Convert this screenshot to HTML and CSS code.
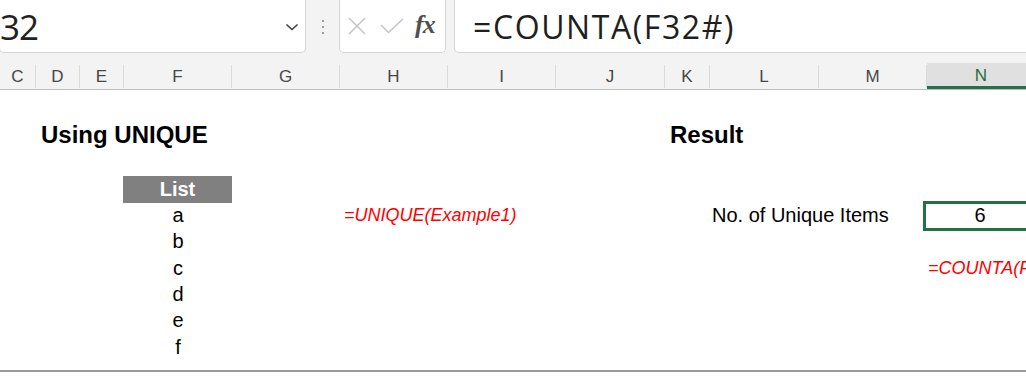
FILE: index.html
```html
<!DOCTYPE html>
<html>
<head>
<meta charset="utf-8">
<link rel="stylesheet" href="styles.css">
</head>
<body>
<div class="app">
  <div class="fbar">
    <div class="namebox">
      <span class="ref">32</span>
      <svg class="chev" width="14" height="8" viewBox="0 0 14 8"><path d="M1.5 1.5 L7 6.5 L12.5 1.5" fill="none" stroke="#404040" stroke-width="1.6"/></svg>
    </div>
    <div class="grip">
      <svg width="4" height="16" viewBox="0 0 4 16"><circle cx="2" cy="2" r="1.1" fill="#8a8a8a"/><circle cx="2" cy="8" r="1.1" fill="#8a8a8a"/><circle cx="2" cy="14" r="1.1" fill="#8a8a8a"/></svg>
    </div>
    <div class="fxbox">
      <svg class="ic-x" width="18" height="18" viewBox="0 0 18 18"><path d="M1 1 L17 17 M17 1 L1 17" stroke="#c4c4c4" stroke-width="1.5" fill="none"/></svg>
      <svg class="ic-ok" width="24" height="16" viewBox="0 0 24 16"><path d="M1 7 L8.5 14.5 L23 1" stroke="#c4c4c4" stroke-width="1.5" fill="none"/></svg>
      <span class="fx">fx</span>
    </div>
    <div class="formula">=COUNTA(F32#)</div>
  </div>

  <div class="grid colheads">
    <div class="ch">C</div>
    <div class="ch">D</div>
    <div class="ch">E</div>
    <div class="ch">F</div>
    <div class="ch">G</div>
    <div class="ch">H</div>
    <div class="ch">I</div>
    <div class="ch">J</div>
    <div class="ch">K</div>
    <div class="ch">L</div>
    <div class="ch">M</div>
    <div class="ch ch-sel">N</div>
  </div>

  <div class="grid sheet">
    <div class="cell title t-left">Using UNIQUE</div>
    <div class="cell title t-right">Result</div>
    <div class="cell listhead">List</div>
    <div class="cell item r5">a</div>
    <div class="cell item r6">b</div>
    <div class="cell item r7">c</div>
    <div class="cell item r8">d</div>
    <div class="cell item r9">e</div>
    <div class="cell item r10">f</div>
    <div class="cell note note-unique">=UNIQUE(Example1)</div>
    <div class="cell label">No. of Unique Items</div>
    <div class="cell result">6</div>
    <div class="cell note note-count">=COUNTA(F32#)</div>
  </div>
</div>
</body>
</html>
```
FILE: styles.css
```css
html, body {
  margin: 0;
  padding: 0;
  background: #ffffff;
  overflow: hidden;
}
.app {
  width: 1026px;
  height: 380px;
  overflow: hidden;
  font-family: "Liberation Sans", Arial, sans-serif;
  background: #ffffff;
}

/* formula bar */
.fbar {
  display: flex;
  height: 53px;
  background: #f3f3f3;
  align-items: stretch;
}
.namebox, .fxbox, .formula {
  background: #ffffff;
  border: 1px solid #d6d6d6;
  border-top: none;
  border-radius: 0 0 5px 5px;
  box-sizing: border-box;
  height: 53px;
}
.namebox {
  width: 307px;
  margin-left: -1px;
  display: flex;
  align-items: center;
  justify-content: space-between;
  padding: 0 6px 0 0;
}
.ref {
  font-family: "Open Sans", "Noto Sans", sans-serif;
  font-size: 35px;
  color: #222;
  margin-left: 0;
  letter-spacing: -1px;
}
.chev {
  margin-top: 2px;
}
.grip {
  width: 33px;
  display: flex;
  align-items: center;
  justify-content: center;
}
.grip svg { margin-top: 1px; }
.fxbox {
  width: 107px;
  display: flex;
  align-items: center;
  padding-left: 8px;
}
.ic-x { margin-right: 14px; }
.ic-ok { margin-right: 11px; }
.fx {
  font-family: "Liberation Serif", "Times New Roman", serif;
  font-style: italic;
  font-weight: bold;
  font-size: 26px;
  color: #505050;
  letter-spacing: -1px;
  margin-top: -3px;
}
.formula {
  margin-left: 8px;
  flex: 1;
  margin-right: -10px;
  display: flex;
  align-items: center;
  padding-left: 18px;
  font-family: "Open Sans", "Noto Sans", sans-serif;
  font-size: 32px;
  letter-spacing: 1.6px;
  color: #1f1f1f;
}

/* grid */
.grid {
  display: grid;
  grid-template-columns: 36px 44px 44px 108px 108px 108px 108px 109px 45px 109px 108px 108px;
  width: 1035px;
}
.colheads {
  background: #f3f3f3;
  height: 37px;
  box-sizing: border-box;
  padding-top: 10px;
  border-bottom: 1px solid #bdbdbd;
}
.ch {
  border-right: 1px solid #dadada;
  display: flex;
  align-items: center;
  justify-content: center;
  font-size: 17px;
  color: #474747;
  margin: 2px 0 1px;
}
.ch-sel {
  background: #e0e0e0;
  color: #1e6e42;
  border-bottom: 3px solid #217346;
  margin: 0;
  padding-top: 2px;
  border-right: none;
}

.sheet {
  height: 280px;
  grid-template-rows: 33px 27px 26px 27px 26px 27px 26px 26px 27px 26px 9px;
  border-bottom: 2px solid #9a9a9a;
}
.cell {
  display: flex;
  align-items: center;
  white-space: nowrap;
  font-size: 20px;
  color: #000;
}
.title {
  font-weight: bold;
  font-size: 24px;
  grid-row: 2;
  padding-left: 5px;
  margin-top: -4px;
}
.t-left { grid-column: 2 / span 4; }
.t-right { grid-column: 9 / span 3; }

.listhead {
  grid-column: 4;
  grid-row: 4;
  background: #808080;
  color: #fff;
  font-weight: bold;
  justify-content: center;
  margin-left: -1px;
}
.item {
  grid-column: 4;
  justify-content: center;
  padding-bottom: 2px;
}
.r5 { grid-row: 5; }
.r6 { grid-row: 6; }
.r7 { grid-row: 7; }
.r8 { grid-row: 8; }
.r9 { grid-row: 9; }
.r10 { grid-row: 10; }

.note {
  color: #ff0000;
  font-style: italic;
  font-size: 18px;
}
.note-unique {
  grid-column: 6 / span 2;
  grid-row: 5;
  padding-left: 4px;
  padding-bottom: 2px;
}
.label {
  grid-column: 10 / span 2;
  grid-row: 5;
  padding-left: 2px;
  padding-bottom: 2px;
}
.result {
  grid-column: 12;
  grid-row: 5;
  justify-content: center;
  padding-bottom: 2px;
  outline: 3px solid #217346;
  outline-offset: -1px;
  margin-left: -2px;
}
.note-count {
  grid-column: 12;
  grid-row: 7;
  padding-left: 1px;
  padding-bottom: 1px;
}
```
